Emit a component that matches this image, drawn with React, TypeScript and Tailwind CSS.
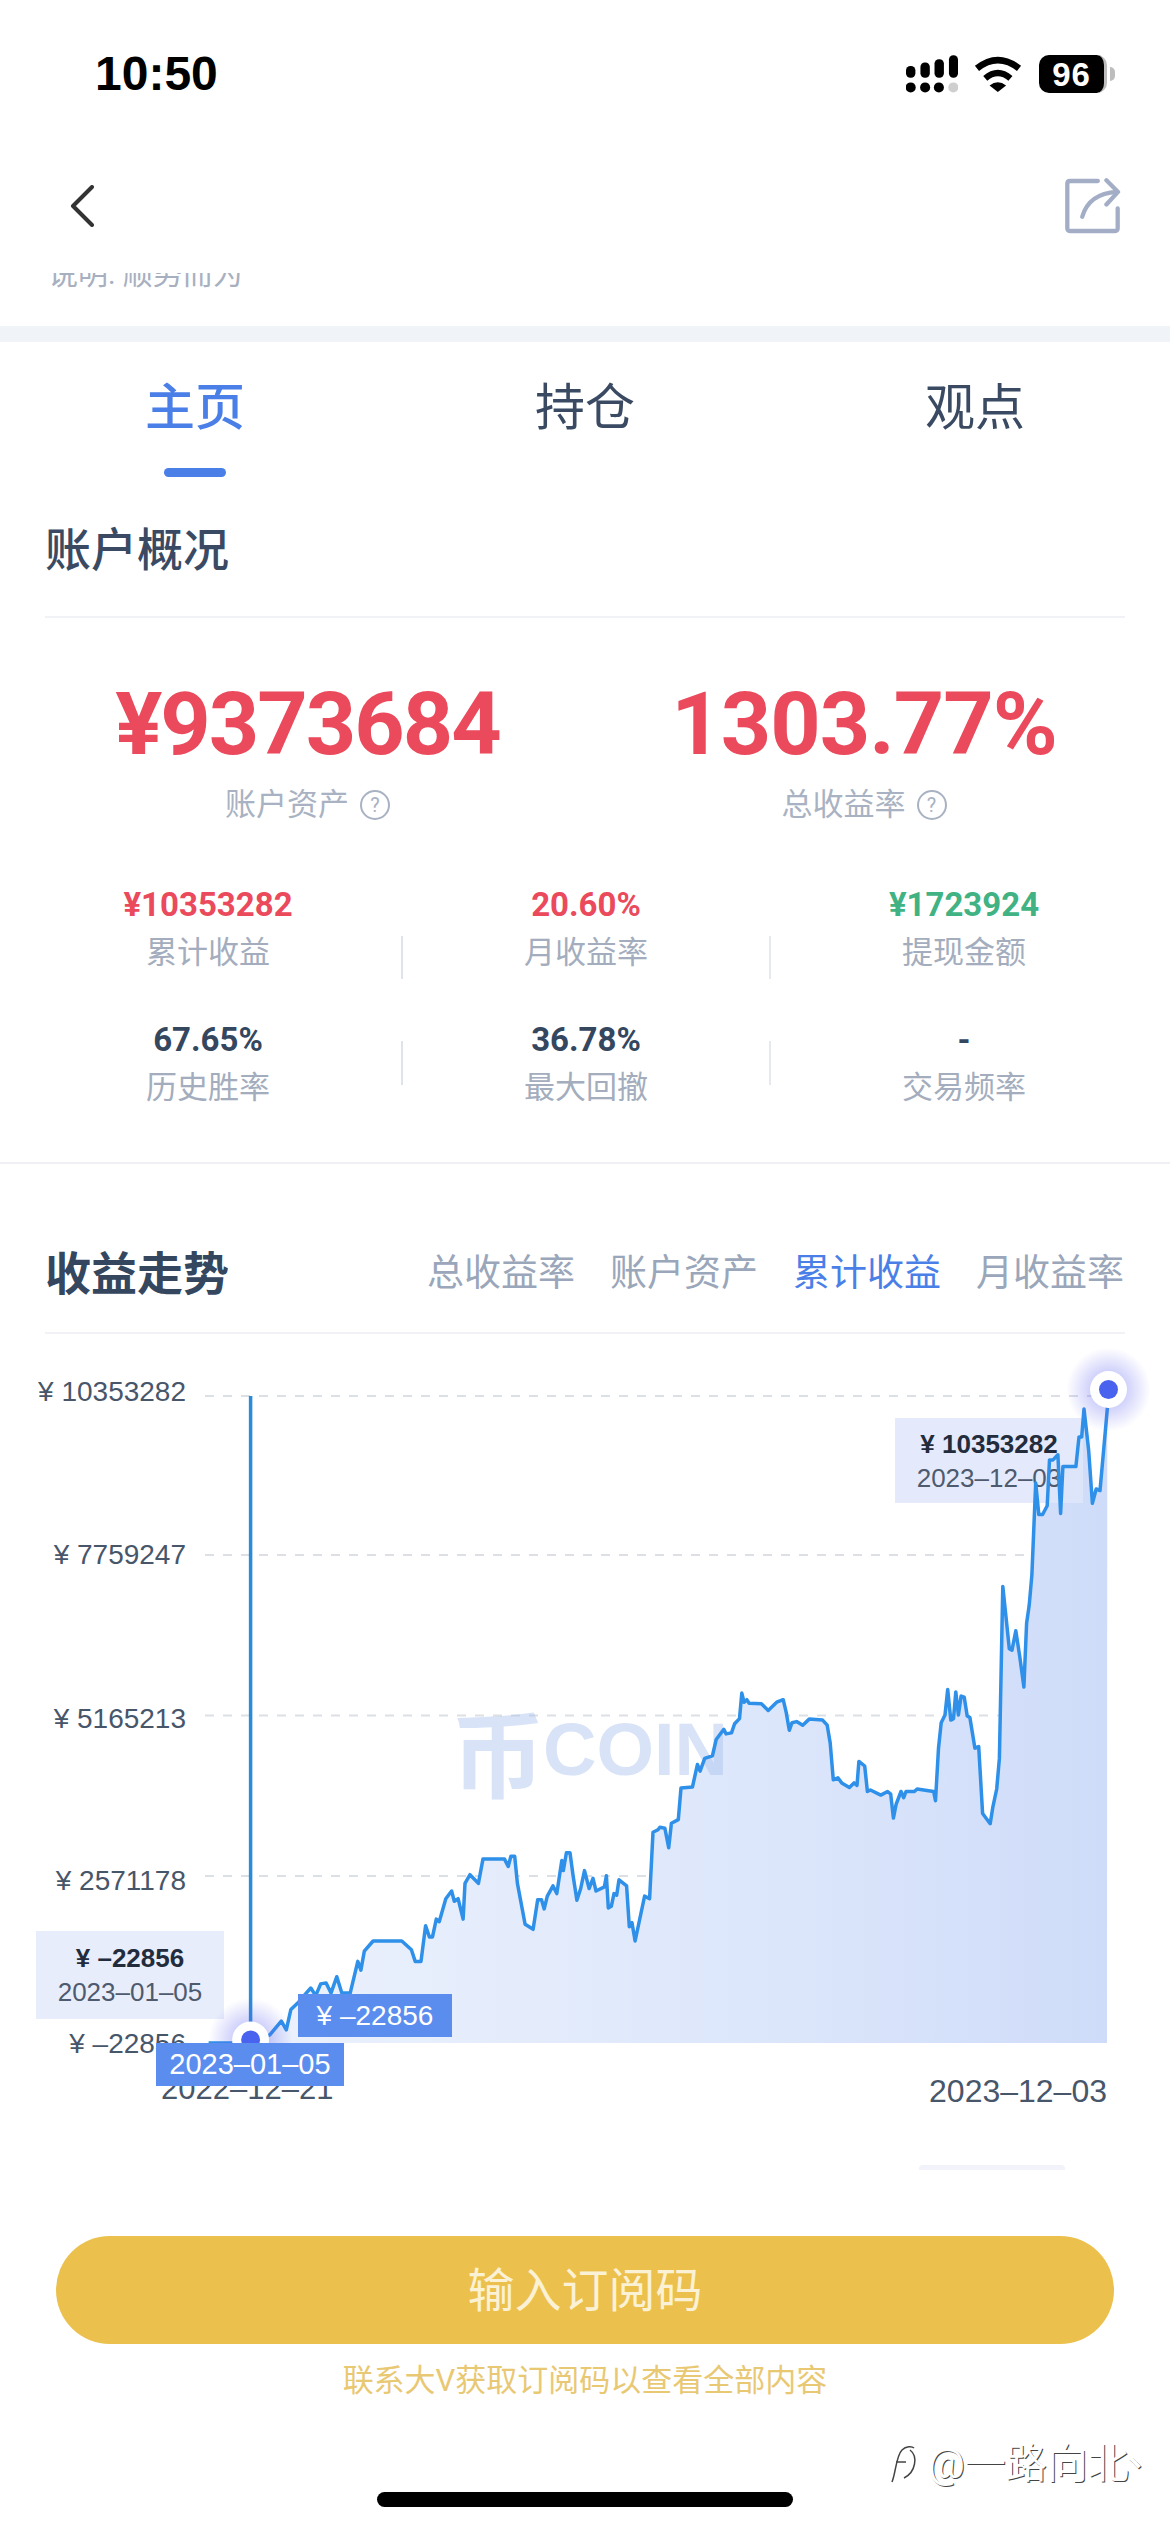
const LEFT_TRACE = [
  545,1378, 600,1378, 655,1378, 705,1362, 735,1335, 748,1352, 760,1312, 780,1298, 800,1280, 812,1270, 825,1285, 838,1262, 852,1260,
  865,1280, 880,1248, 893,1280, 915,1280, 935,1218, 943,1235, 952,1198, 975,1178, 1050,1178, 1075,1195, 1085,1218, 1100,1218,
  1112,1148, 1122,1170, 1130,1170, 1140,1135, 1148,1140, 1165,1095, 1180,1080, 1187,1100, 1197,1095, 1210,1135, 1215,1065,
  1228,1048, 1250,1065, 1262,1017, 1318,1017, 1328,1032, 1335,1012, 1345,1012, 1352,1065, 1372,1145, 1393,1155, 1405,1097,
  1415,1097, 1422,1115, 1430,1090, 1445,1070, 1455,1085, 1468,1020, 1472,1040, 1480,1005,
];

const RIGHT_TRACE = [
  0,1005, 8,1050, 18,1098, 28,1075, 38,1040, 50,1075, 60,1055, 68,1080, 90,1072, 95,1050, 100,1113, 108,1110, 115,1085, 122,1088,
  128,1058, 148,1070, 155,1150, 162,1142, 170,1178, 195,1090, 208,1095, 217,965, 230,960, 235,955, 248,957, 258,995, 265,947,
  283,940, 290,878, 320,876, 333,832, 340,845, 352,820, 372,815, 382,783, 402,763, 408,772, 422,770, 430,752, 443,742, 449,692,
  455,710, 462,705, 468,712, 500,713, 518,726, 540,710, 557,705, 565,730, 573,765, 580,750, 592,748, 608,755, 625,743, 660,745,
  672,755, 680,790, 688,862, 700,858, 710,868, 730,877, 742,868, 750,873, 755,826, 770,835, 777,885, 785,882, 812,892, 830,885,
  838,890, 845,937, 852,910, 865,885, 872,897, 878,885, 900,885, 907,880, 950,885, 955,903, 963,800, 970,750, 980,735, 987,685,
  995,745, 1002,742, 1008,690, 1015,735, 1022,698, 1030,700, 1038,737, 1045,740, 1058,800, 1068,797, 1078,928, 1098,948, 1105,915,
  1115,880, 1122,820, 1131,483, 1148,605, 1155,608, 1165,570, 1175,620, 1186,680, 1193,555, 1200,520, 1207,460, 1217,280, 1225,342,
  1235,342, 1247,325, 1253,235, 1262,235, 1275,225, 1282,340, 1288,248, 1322,248, 1330,190, 1337,190, 1343,135, 1355,215, 1365,320,
  1375,292, 1385,295, 1395,210, 1404,135, 1404,97,
];

function toPage(trace: number[], offsetX: number) {
  const out: string[] = [];
  for (let i = 0; i < trace.length; i += 2) {
    const x = offsetX + trace[i] / 2.613;
    const y = 1340 + trace[i + 1] / 1.96;
    out.push(`${x.toFixed(1)},${y.toFixed(1)}`);
  }
  return out;
}

const linePoints = [...toPage(LEFT_TRACE, 0), ...toPage(RIGHT_TRACE, 570)].join(' ');
const areaPoints = `208,2043 ${linePoints} 1107,2043`;

function StatusBar() {
  return (
    <div className="flex h-[130px] items-start justify-between pl-[95px] pr-[55px] pt-[54px] font-['Liberation_Sans',sans-serif]">
      <div className="text-[48px] font-bold leading-[40px] text-black">10:50</div>
      <div className="flex h-[40px] items-center">
        <svg width="52" height="38" viewBox="140 108 155 112">
          <rect x="140" y="140" width="28" height="35" rx="13" />
          <rect x="183" y="130" width="28" height="45" rx="13" />
          <rect x="225" y="120" width="28" height="55" rx="13" />
          <rect x="268" y="108" width="27" height="67" rx="13" />
          <circle cx="154" cy="204" r="15" />
          <circle cx="197" cy="204" r="15" />
          <circle cx="238" cy="204" r="15" />
          <circle cx="281" cy="204" r="15" fill="#cfcfcf" />
        </svg>
        <svg className="ml-[16px]" width="48" height="36" viewBox="345 105 145 108" fill="none" stroke="#000">
          <path d="M354 142 Q417 92 481 142" strokeWidth="20" />
          <path d="M379 172 Q417 140 455 172" strokeWidth="19" />
          <path d="M392 194 Q417 174 442 194 L417 213 Z" fill="#000" stroke="none" />
        </svg>
        <div className="ml-[17px] flex h-[38px] w-[68px] items-center justify-center rounded-[10px] border-r-[3px] border-[#bdbdbd] bg-black text-[33px] font-bold leading-none tracking-[1px] text-white">
          96
        </div>
        <div className="ml-[3px] h-[14px] w-[5px] rounded-r-full bg-[#bdbdbd]" />
      </div>
    </div>
  );
}

function NavBar() {
  return (
    <div className="flex h-[143px] items-start justify-between pl-[70px] pr-[49px] pt-[47px]">
      <svg className="mt-[8px]" width="24" height="42" viewBox="0 0 24 42" fill="none" stroke="#333" strokeWidth="4" strokeLinecap="round" strokeLinejoin="round">
        <path d="M22 2 L3 21 L22 40" />
      </svg>
      <svg width="57" height="57" viewBox="610 470 172 172" fill="none" stroke="#a3aec6" strokeWidth="13" strokeLinecap="round" strokeLinejoin="round">
        <path d="M712 482 H628 Q620 482 620 490 V625 Q620 633 628 633 H764 Q772 633 772 625 V565" />
        <path d="M665 590 Q685 520 770 515" />
        <path d="M738 480 L773 515 L738 553" />
      </svg>
    </div>
  );
}

function HelpIcon() {
  return (
    <span className="ml-[11px] flex h-[30px] w-[30px] items-center justify-center rounded-full border-2 border-[#a9b2c2] text-[20px] leading-none text-[#a9b2c2]">
      ?
    </span>
  );
}

function Stat({ value, label, color }: { value: string; label: string; color: string }) {
  return (
    <div className="flex flex-col items-center">
      <div className={`font-['Roboto',sans-serif] text-[33px] font-bold leading-[40px] ${color}`}>{value}</div>
      <div className="mt-[10px] text-[31px] leading-[36px] text-[#a3adbd]">{label}</div>
    </div>
  );
}

function Overview() {
  return (
    <>
      <div className="mt-[45px] px-[45px] text-[46px] font-medium leading-[56px] text-[#3a4a63]">账户概况</div>
      <div className="mx-[45px] mt-[38px] h-[2px] bg-[#f0f2f5]" />

      <div className="mt-[61px] flex">
        <div className="flex w-[615px] flex-col items-center">
          <div className="font-['Roboto',sans-serif] text-[88px] font-bold leading-[90px] tracking-[-2px] text-[#ea4a5b]">¥9373684</div>
          <div className="mt-[18px] flex items-center text-[31px] leading-[36px] text-[#a9b2c2]">
            账户资产
            <HelpIcon />
          </div>
        </div>
        <div className="flex w-[498px] flex-col items-center">
          <div className="font-['Roboto',sans-serif] text-[88px] font-bold leading-[90px] tracking-[-1px] text-[#ea4a5b]">1303.77%</div>
          <div className="mt-[18px] flex items-center text-[31px] leading-[36px] text-[#a9b2c2]">
            总收益率
            <HelpIcon />
          </div>
        </div>
      </div>

      <div className="mt-[62px] flex pl-[15px]">
        <div className="w-[386px]">
          <Stat value="¥10353282" label="累计收益" color="text-[#ea4a5b]" />
        </div>
        <div className="mt-[51px] h-[43px] w-[2px] bg-[#dfe3ea]" />
        <div className="w-[366px]">
          <Stat value="20.60%" label="月收益率" color="text-[#ea4a5b]" />
        </div>
        <div className="mt-[51px] h-[43px] w-[2px] bg-[#e6e9ee]" />
        <div className="w-[386px]">
          <Stat value="¥1723924" label="提现金额" color="text-[#41b283]" />
        </div>
      </div>

      <div className="mt-[41px] flex pl-[15px]">
        <div className="w-[386px]">
          <Stat value="67.65%" label="历史胜率" color="text-[#34475f]" />
        </div>
        <div className="mt-[21px] h-[44px] w-[2px] bg-[#dfe3ea]" />
        <div className="w-[366px]">
          <Stat value="36.78%" label="最大回撤" color="text-[#34475f]" />
        </div>
        <div className="mt-[21px] h-[44px] w-[2px] bg-[#e6e9ee]" />
        <div className="w-[386px]">
          <Stat value="-" label="交易频率" color="text-[#34475f]" />
        </div>
      </div>

      <div className="mt-[56px] h-[2px] bg-[#eef0f3]" />
    </>
  );
}

function Chart() {
  return (
    <div className="relative h-[840px] font-['Liberation_Sans',sans-serif]">
      <svg className="absolute inset-0" width="1170" height="840" viewBox="0 1334 1170 840" fill="none">
        <defs>
          <linearGradient id="area" x1="0" y1="0" x2="1" y2="0">
            <stop offset="0" stopColor="#edf2fc" />
            <stop offset="0.6" stopColor="#dde7fb" />
            <stop offset="1" stopColor="#cfdcf9" />
          </linearGradient>
        </defs>
        <g stroke="#dcdfe4" strokeWidth="2" strokeDasharray="9 9">
          <path d="M205 1396 H1107" />
          <path d="M205 1555 H1107" />
          <path d="M205 1715.5 H1107" />
          <path d="M205 1876 H1107" />
        </g>
        <polygon points={areaPoints} fill="url(#area)" />
      </svg>

      {/* watermark */}
      <div className="absolute left-[451px] top-[366px] flex items-center text-[#a9c0ee]/45">
        <span className="font-['Noto_Sans_CJK_SC',sans-serif] text-[94px] font-bold leading-[100px]">币</span>
        <span className="-ml-[2px] text-[74px] font-bold leading-[80px]">COIN</span>
      </div>

      <div className="absolute right-[984px] top-[42px] text-[28px] leading-[32px] text-[#48566a]">¥ 10353282</div>
      <div className="absolute right-[984px] top-[205px] text-[28px] leading-[32px] text-[#48566a]">¥ 7759247</div>
      <div className="absolute right-[984px] top-[369px] text-[28px] leading-[32px] text-[#48566a]">¥ 5165213</div>
      <div className="absolute right-[984px] top-[531px] text-[28px] leading-[32px] text-[#48566a]">¥ 2571178</div>
      <div className="absolute right-[984px] top-[694px] text-[28px] leading-[32px] text-[#48566a]">¥ –22856</div>

      <div className="absolute left-[161px] top-[737px] text-[31px] leading-[36px] text-[#48566a]">2022–12–21</div>
      <div className="absolute right-[63px] top-[739px] text-[32px] leading-[36px] text-[#48566a]">2023–12–03</div>

      <div className="absolute left-[36px] top-[597px] flex h-[88px] w-[188px] flex-col items-center justify-center bg-[#e8edfb]">
        <div className="text-[26px] font-bold leading-[34px] text-[#222c3d]">¥ –22856</div>
        <div className="text-[26px] leading-[34px] text-[#4e5a6e]">2023–01–05</div>
      </div>
      <div className="absolute left-[895px] top-[84px] flex h-[85px] w-[188px] flex-col items-center justify-center bg-[#dfe6fa]/85">
        <div className="text-[26px] font-bold leading-[34px] text-[#222c3d]">¥ 10353282</div>
        <div className="text-[26px] leading-[34px] text-[#4e5a6e]">2023–12–03</div>
      </div>

      <svg className="absolute inset-0" width="1170" height="840" viewBox="0 1334 1170 840" fill="none">
        <defs>
          <radialGradient id="halo">
            <stop offset="0.4" stopColor="#5b5ff0" stopOpacity="0.3" />
            <stop offset="1" stopColor="#5b5ff0" stopOpacity="0" />
          </radialGradient>
        </defs>
        <path d="M250.6 1396 V2030" stroke="#2a8bd8" strokeWidth="3.5" />
        <polyline points={linePoints} stroke="#2e90e8" strokeWidth="3.5" strokeLinejoin="round" />
        <circle cx="250.6" cy="2040" r="42" fill="url(#halo)" />
        <circle cx="250.6" cy="2040" r="18.5" fill="#fff" />
        <circle cx="250.6" cy="2040" r="9.5" fill="#4a63ee" />
        <circle cx="1108.5" cy="1389.5" r="42" fill="url(#halo)" />
        <circle cx="1108.5" cy="1389.5" r="18.5" fill="#fff" />
        <circle cx="1108.5" cy="1389.5" r="9.5" fill="#4a63ee" />
      </svg>

      <div className="absolute left-[298px] top-[660px] flex h-[43px] w-[154px] items-center justify-center bg-[#5b8def] text-[28px] leading-none text-white">
        ¥ –22856
      </div>
      <div className="absolute left-[156px] top-[709px] flex h-[43px] w-[188px] items-center justify-center bg-[#5b8def] text-[29px] leading-none text-white">
        2023–01–05
      </div>

      <div className="absolute left-[919px] top-[831px] h-[5px] w-[146px] rounded-t-[4px] bg-[#f2f3fa]" />
    </div>
  );
}

export default function App() {
  return (
    <div className="relative flex h-[2532px] w-[1170px] flex-col overflow-hidden bg-white font-['Roboto','Noto_Sans_CJK_SC',sans-serif]">
      <StatusBar />
      <NavBar />

      <div className="h-[53px] overflow-hidden pl-[48px]">
        <div className="-mt-[16px] text-[30px] leading-[34px] text-[#a8b0c0]">说明: 顺势而为</div>
      </div>
      <div className="h-[16px] bg-[#f0f3f8]" />

      <div className="grid grid-cols-3">
        <div className="flex flex-col items-center pt-[36px]">
          <div className="text-[50px] font-medium leading-[60px] text-[#4b7fe8]">主页</div>
          <div className="mt-[30px] h-[9px] w-[62px] rounded-full bg-[#4b7fe8]" />
        </div>
        <div className="flex flex-col items-center pt-[36px]">
          <div className="text-[50px] leading-[60px] text-[#3a4a63]">持仓</div>
        </div>
        <div className="flex flex-col items-center pt-[36px]">
          <div className="text-[50px] leading-[60px] text-[#3a4a63]">观点</div>
        </div>
      </div>

      <Overview />

      <div className="mt-[82px] flex h-[56px] items-center justify-between pl-[45px] pr-[46px]">
        <div className="text-[46px] font-bold leading-[56px] text-[#34475f]">收益走势</div>
        <div className="flex items-center gap-[35px] text-[37px] leading-[44px] text-[#9aa6ba]">
          <span>总收益率</span>
          <span>账户资产</span>
          <span className="text-[#4b7fe8]">累计收益</span>
          <span>月收益率</span>
        </div>
      </div>
      <div className="mx-[45px] mt-[30px] h-[2px] bg-[#f0f2f5]" />

      <Chart />

      <div className="mx-[56px] mt-[62px] flex h-[108px] items-center justify-center rounded-full bg-[#ebc04c] text-[47px] leading-none text-[#fbf1d5]">
        输入订阅码
      </div>
      <div className="mt-[17px] text-center text-[31px] leading-[40px] text-[#e9c873]">联系大V获取订阅码以查看全部内容</div>
      <div className="mt-[91px] h-[15px] w-[416px] self-center rounded-full bg-black" />

      {/* screenshot watermark */}
      <div className="absolute left-[888px] top-[2440px] flex items-center whitespace-nowrap text-[41px] leading-[48px] text-white [text-shadow:1px_1px_0_#444]">
        <svg className="shrink-0" width="34" height="44" viewBox="0 0 34 44" fill="none" stroke="#444" strokeWidth="1.5">
          <path d="M4 40 C8 30 8 14 14 8 C18 4 24 4 26 6" />
          <path d="M22 8 C30 14 28 30 16 36" />
          <path d="M8 20 H18" />
        </svg>
        <span className="ml-[6px]">@一路向北</span>
        <span className="relative -top-[12px] -ml-[2px] w-[30px] text-right">、</span>
      </div>
    </div>
  );
}
